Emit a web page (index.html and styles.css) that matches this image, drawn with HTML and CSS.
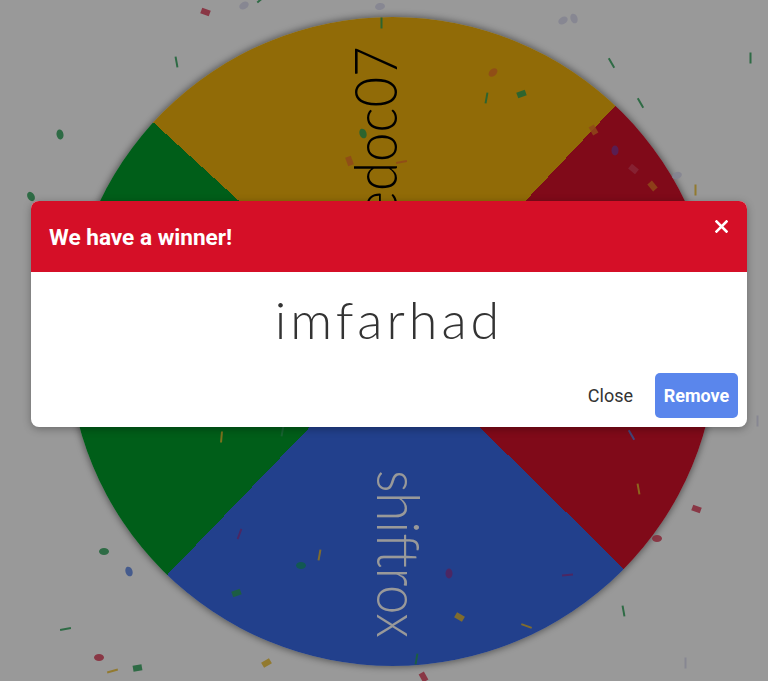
FILE: index.html
```html
<!DOCTYPE html>
<html lang="en">
<head>
    <meta charset="UTF-8">
    <meta name="viewport" content="width=device-width, initial-scale=1.0">
    <title>Wheel of Names</title>
    <link rel="stylesheet" href="styles.css">
</head>
<body>
    <div class="stage">
        <div class="wheel">
            <div class="label label-top"><span>edoc07</span></div>
            <div class="label label-right"><span>imfarhad</span></div>
            <div class="label label-bottom"><span>shiftrox</span></div>
            <div class="label label-left"><span>devgeek</span></div>
        </div>
    </div>

    <!-- confetti -->
    <div class="confetti">
        <i class="c rect red" style="left:201px;top:9px;transform:rotate(20deg)"></i>
        <i class="c oval lav" style="left:239px;top:2px;transform:rotate(-30deg)"></i>
        <i class="c line green" style="left:256px;top:-2px;transform:rotate(-40deg)"></i>
        <i class="c oval lav" style="left:375px;top:3px;transform:rotate(-10deg)"></i>
        <i class="c oval lav" style="left:558px;top:17px;transform:rotate(-30deg)"></i>
        <i class="c oval lav" style="left:569px;top:15px;transform:rotate(70deg)"></i>
        <i class="c line green" style="left:171px;top:61px;transform:rotate(80deg)"></i>
        <i class="c oval green" style="left:55px;top:131px;transform:rotate(80deg)"></i>
        <i class="c oval green" style="left:26px;top:193px;transform:rotate(60deg)"></i>
        <i class="c line green" style="left:376px;top:22px;transform:rotate(90deg)"></i>
        <i class="c oval orange" style="left:488px;top:69px;transform:rotate(-40deg)"></i>
        <i class="c line green" style="left:481px;top:97px;transform:rotate(100deg)"></i>
        <i class="c rect green" style="left:517px;top:91px;transform:rotate(-20deg)"></i>
        <i class="c line green" style="left:606px;top:62px;transform:rotate(60deg)"></i>
        <i class="c line green" style="left:635px;top:102px;transform:rotate(60deg)"></i>
        <i class="c line green" style="left:745px;top:57px;transform:rotate(90deg)"></i>
        <i class="c rect orange" style="left:345px;top:158px;transform:rotate(70deg)"></i>
        <i class="c line orange" style="left:396px;top:161px;transform:rotate(-10deg)"></i>
        <i class="c oval green" style="left:358px;top:130px;transform:rotate(70deg)"></i>
        <i class="c rect orange" style="left:589px;top:127px;transform:rotate(60deg)"></i>
        <i class="c oval purple" style="left:610px;top:147px;transform:rotate(90deg)"></i>
        <i class="c rect red" style="left:629px;top:166px;transform:rotate(40deg)"></i>
        <i class="c rect orange" style="left:648px;top:183px;transform:rotate(50deg)"></i>
        <i class="c oval lav" style="left:672px;top:172px;transform:rotate(-20deg)"></i>
        <i class="c line yellow" style="left:690px;top:189px;transform:rotate(90deg)"></i>
        <i class="c line yellow" style="left:216px;top:436px;transform:rotate(95deg)"></i>
        <i class="c line green" style="left:277px;top:430px;transform:rotate(100deg)"></i>
        <i class="c line blue" style="left:626px;top:434px;transform:rotate(60deg)"></i>
        <i class="c oval green" style="left:99px;top:548px;transform:rotate(0deg)"></i>
        <i class="c oval blue" style="left:124px;top:568px;transform:rotate(70deg)"></i>
        <i class="c line green" style="left:60px;top:628px;transform:rotate(-10deg)"></i>
        <i class="c oval red" style="left:94px;top:654px;transform:rotate(0deg)"></i>
        <i class="c line yellow" style="left:107px;top:670px;transform:rotate(-15deg)"></i>
        <i class="c rect green" style="left:133px;top:665px;transform:rotate(-10deg)"></i>
        <i class="c line purple" style="left:234px;top:533px;transform:rotate(110deg)"></i>
        <i class="c line yellow" style="left:314px;top:554px;transform:rotate(100deg)"></i>
        <i class="c oval teal" style="left:296px;top:562px;transform:rotate(0deg)"></i>
        <i class="c rect green" style="left:232px;top:590px;transform:rotate(-20deg)"></i>
        <i class="c oval purple" style="left:444px;top:570px;transform:rotate(90deg)"></i>
        <i class="c rect yellow" style="left:455px;top:614px;transform:rotate(30deg)"></i>
        <i class="c line yellow" style="left:521px;top:625px;transform:rotate(20deg)"></i>
        <i class="c line green" style="left:411px;top:658px;transform:rotate(100deg)"></i>
        <i class="c line yellow" style="left:633px;top:488px;transform:rotate(80deg)"></i>
        <i class="c line purple" style="left:562px;top:574px;transform:rotate(-5deg)"></i>
        <i class="c rect red" style="left:692px;top:506px;transform:rotate(20deg)"></i>
        <i class="c oval red" style="left:652px;top:535px;transform:rotate(0deg)"></i>
        <i class="c line green" style="left:618px;top:610px;transform:rotate(80deg)"></i>
        <i class="c line lav" style="left:680px;top:662px;transform:rotate(90deg)"></i>
        <i class="c rect yellow" style="left:262px;top:660px;transform:rotate(-30deg)"></i>
        <i class="c rect red" style="left:419px;top:674px;transform:rotate(60deg)"></i>
        <i class="c line lav" style="left:752px;top:420px;transform:rotate(90deg)"></i>
    </div>

    <div class="backdrop"></div>

    <div class="modal">
        <div class="modal-header">
            <h5 class="modal-title">We have a winner!</h5>
            <button class="close" aria-label="Close">
                <svg width="13" height="13" viewBox="0 0 13 13">
                    <path d="M1.5 1.5 L11.5 11.5 M11.5 1.5 L1.5 11.5" stroke="#fff" stroke-width="2.6" stroke-linecap="square"/>
                </svg>
            </button>
        </div>
        <div class="modal-body">
            <div class="winner">imfarhad</div>
        </div>
        <div class="modal-footer">
            <button class="btn btn-link">Close</button>
            <button class="btn btn-primary">Remove</button>
        </div>
    </div>
</body>
</html>
```

FILE: styles.css
```css
/* page */
html, body {
    margin: 0;
    height: 100%;
    overflow: hidden;
}

body {
    background-color: #fff;
    font-family: Roboto, "Liberation Sans", Arial, sans-serif;
}

.stage {
    padding-top: 17px;
    padding-left: 68px;
}

/* the wheel */
.wheel {
    position: relative;
    width: 649px;
    height: 649px;
    border-radius: 50%;
    background: conic-gradient(
        #f2b30c 0deg 43.4deg,
        #d5112b 43.4deg 134.5deg,
        #3a6cea 134.5deg 224deg,
        #009d2a 224deg 312.5deg,
        #f2b30c 312.5deg 360deg
    );
    box-shadow: 0 0 7px 1px rgba(0, 0, 0, 0.45);
    overflow: hidden;
}

.label {
    position: absolute;
    left: 50%;
    top: 50%;
    width: 296px;
    height: 70px;
    margin-top: -35px;
    transform-origin: 0 50%;
    display: flex;
    justify-content: flex-end;
    align-items: center;
    font-family: "Lato", "Open Sans", sans-serif;
    font-weight: 300;
    font-size: 60px;
    line-height: 1;
    white-space: nowrap;
}

.label span {
    display: inline-block;
    transform-origin: 100% 50%;
    transform: scaleX(0.88);
}

.label-top {
    transform: rotate(-90deg) translateY(-19px);
    color: #000;
}

.label-bottom {
    transform: rotate(90deg) translateY(-7px);
    color: #fff;
}

.label-right {
    transform: rotate(0deg);
    color: #fff;
}

.label-left {
    transform: rotate(180deg);
    color: #fff;
}

/* confetti */
.confetti {
    position: absolute;
    inset: 0;
    pointer-events: none;
}

.c {
    position: absolute;
    display: block;
    opacity: 0.85;
}

.c.rect { width: 9px; height: 6px; }
.c.oval { width: 10px; height: 7px; border-radius: 50%; }
.c.line { width: 11px; height: 2px; }

.red { background: #e0405a; }
.green { background: #2fa55a; }
.lav { background: #dcdcf2; }
.orange { background: #f07a2a; }
.purple { background: #8a3a9a; }
.yellow { background: #f2c230; }
.blue { background: #5a86e8; }
.teal { background: #1a9a7a; }

/* modal */
.backdrop {
    position: absolute;
    inset: 0;
    background-color: rgba(0, 0, 0, 0.4);
}

.modal {
    position: absolute;
    left: 31px;
    top: 201px;
    width: 716px;
    background-color: #fff;
    border-radius: 8px;
    overflow: hidden;
    box-shadow: 0 2px 8px rgba(0, 0, 0, 0.3);
}

.modal-header {
    height: 71px;
    background-color: #d50f27;
    display: flex;
    align-items: center;
    justify-content: space-between;
    padding: 0 19px 0 18px;
}

.modal-title {
    margin: 0;
    color: #fff;
    font-size: 22.6px;
    font-weight: 700;
    padding-top: 2px;
}

.close {
    background: none;
    border: none;
    padding: 0;
    margin-top: -20px;
    cursor: pointer;
    display: flex;
}

.modal-body {
    height: 97px;
    display: flex;
    justify-content: center;
    align-items: center;
}

.winner {
    font-family: "Lato", "Open Sans", sans-serif;
    font-weight: 300;
    font-size: 52px;
    letter-spacing: 4px;
    color: #333;
    margin-top: -4px;
    margin-left: 0;
}

.modal-footer {
    display: flex;
    justify-content: flex-end;
    align-items: center;
    gap: 0;
    padding: 4px 9px 9px;
}

.btn {
    font-family: Roboto, "Liberation Sans", Arial, sans-serif;
    font-size: 18px;
    border: none;
    border-radius: 5px;
    height: 45px;
    cursor: pointer;
}

.btn-link {
    background: none;
    color: #333;
    font-weight: 400;
    padding: 0 22px 0 12px;
}

.btn-primary {
    background-color: #5a86ec;
    color: #fff;
    font-weight: 700;
    width: 83px;
    padding: 0;
}
```
